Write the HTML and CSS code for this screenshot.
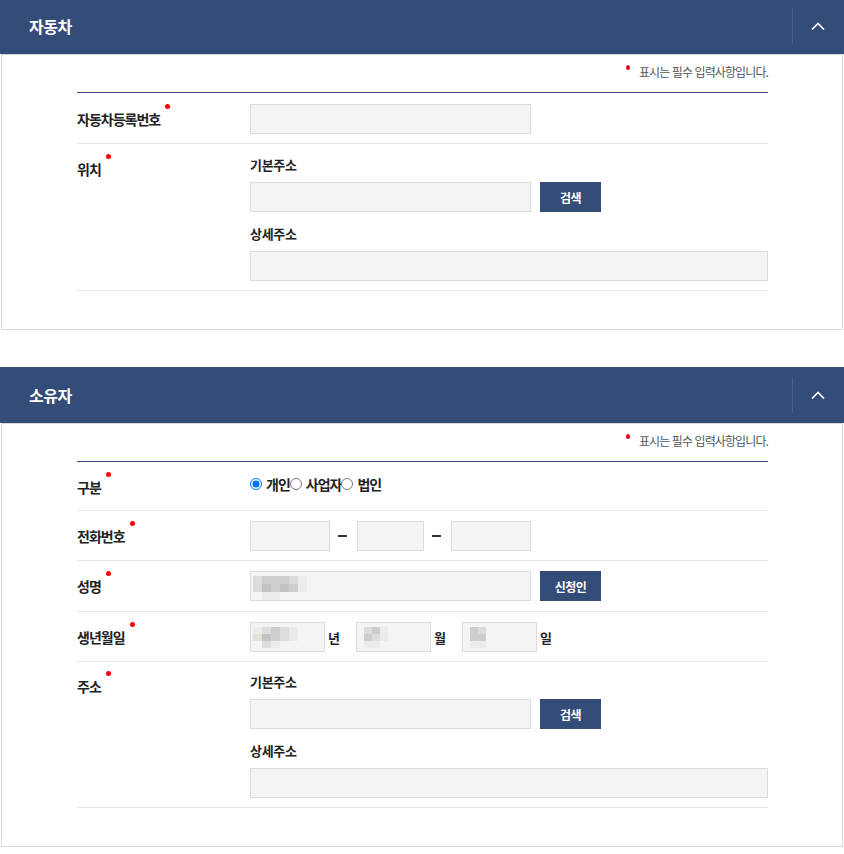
FILE: index.html
```html
<!DOCTYPE html>
<html lang="ko">
<head>
<meta charset="utf-8">
<title>자동차 / 소유자</title>
<link rel="stylesheet" href="styles.css">
</head>
<body>
<div class="page">

  <section class="panel">
    <div class="panel-head">
      <h2 class="panel-title">자동차</h2>
      <button class="panel-toggle" type="button" aria-label="접기">
        <svg width="14" height="8" viewBox="0 0 14 8"><polyline points="1,7.5 7,1.5 13,7.5" fill="none" stroke="#fff" stroke-width="1.6"/></svg>
      </button>
    </div>
    <div class="panel-body">
      <p class="req-note"><span class="note-dot"></span>표시는 필수 입력사항입니다.</p>
      <div class="form-table">
        <div class="form-row row-first">
          <div class="form-label">자동차등록번호<span class="req"></span></div>
          <div class="form-field"><input class="inp w-md" type="text"></div>
        </div>
        <div class="form-row">
          <div class="form-label">위치<span class="req"></span></div>
          <div class="form-field">
            <div class="sub-label">기본주소</div>
            <div class="field-line"><input class="inp w-md" type="text"><button class="btn" type="button">검색</button></div>
            <div class="sub-label next">상세주소</div>
            <div class="field-line"><input class="inp w-full" type="text"></div>
          </div>
        </div>
      </div>
    </div>
  </section>

  <section class="panel">
    <div class="panel-head">
      <h2 class="panel-title">소유자</h2>
      <button class="panel-toggle" type="button" aria-label="접기">
        <svg width="14" height="8" viewBox="0 0 14 8"><polyline points="1,7.5 7,1.5 13,7.5" fill="none" stroke="#fff" stroke-width="1.6"/></svg>
      </button>
    </div>
    <div class="panel-body">
      <p class="req-note"><span class="note-dot"></span>표시는 필수 입력사항입니다.</p>
      <div class="form-table">
        <div class="form-row row-short">
          <div class="form-label">구분<span class="req"></span></div>
          <div class="form-field radios">
            <label class="radio"><input type="radio" name="kind" checked>개인</label><label class="radio"><input type="radio" name="kind">사업자</label><label class="radio"><input type="radio" name="kind">법인</label>
          </div>
        </div>
        <div class="form-row">
          <div class="form-label">전화번호<span class="req"></span></div>
          <div class="form-field field-line flush">
            <input class="inp w-80" type="text"><span class="dash"></span><input class="inp w-67" type="text"><span class="dash"></span><input class="inp w-80" type="text">
          </div>
        </div>
        <div class="form-row row-tall">
          <div class="form-label">성명<span class="req"></span></div>
          <div class="form-field field-line flush">
            <div class="inp w-md masked">
              <div class="mosaic cols6">
                <span class="c3"></span><span class="c2"></span><span class="c2"></span><span class="c2"></span><span class="c3"></span><span class="c4"></span>
                <span class="c3"></span><span class="c1"></span><span class="c2"></span><span class="c1"></span><span class="c2"></span><span class="c4"></span>
                <span class="c0"></span><span class="c4"></span><span class="c4"></span><span class="c0"></span><span class="c0"></span><span class="c0"></span>
              </div>
            </div>
            <button class="btn" type="button">신청인</button>
          </div>
        </div>
        <div class="form-row">
          <div class="form-label">생년월일<span class="req"></span></div>
          <div class="form-field field-line flush">
            <div class="inp w-75 masked">
              <div class="mosaic cols5">
                <span class="c4"></span><span class="c3"></span><span class="c2"></span><span class="c3"></span><span class="c4"></span>
                <span class="c5"></span><span class="c1"></span><span class="c2"></span><span class="c3"></span><span class="c4"></span>
                <span class="c0"></span><span class="c3"></span><span class="c4"></span><span class="c0"></span><span class="c0"></span>
              </div>
            </div><span class="unit">년</span>
            <div class="inp w-75 masked m-sm">
              <div class="mosaic cols3">
                <span class="c3"></span><span class="c2"></span><span class="c4"></span>
                <span class="c2"></span><span class="c3"></span><span class="c4"></span>
                <span class="c4"></span><span class="c4"></span><span class="c0"></span>
              </div>
            </div><span class="unit">월</span>
            <div class="inp w-75 masked m-sm">
              <div class="mosaic cols3">
                <span class="c2"></span><span class="c3"></span><span class="c0"></span>
                <span class="c2"></span><span class="c2"></span><span class="c0"></span>
                <span class="c4"></span><span class="c4"></span><span class="c0"></span>
              </div>
            </div><span class="unit">일</span>
          </div>
        </div>
        <div class="form-row row-addr">
          <div class="form-label">주소<span class="req"></span></div>
          <div class="form-field">
            <div class="sub-label">기본주소</div>
            <div class="field-line"><input class="inp w-md" type="text"><button class="btn" type="button">검색</button></div>
            <div class="sub-label next">상세주소</div>
            <div class="field-line"><input class="inp w-full" type="text"></div>
          </div>
        </div>
      </div>
    </div>
  </section>

</div>
</body>
</html>
```

FILE: styles.css
```css
body {
  margin: 0;
  background: #fff;
  color: #222;
  font-family: "Noto Sans CJK KR", "Noto Sans", sans-serif;
}

.page {
  margin-top: -2px;
}

.panel + .panel {
  margin-top: 37px;
}

.panel-head {
  height: 56px;
  background: #344c78;
  display: flex;
  align-items: center;
  padding: 0 2px 0 29px;
}

.panel-title {
  margin: 0;
  font-size: 16px;
  font-weight: 700;
  color: #fff;
  letter-spacing: -0.5px;
  line-height: 20px;
}

.panel-toggle {
  margin-left: auto;
  width: 50px;
  height: 36px;
  padding: 0;
  border: 0;
  border-left: 1px solid #4b6089;
  background: transparent;
  display: flex;
  align-items: center;
  justify-content: center;
}

.panel-toggle svg {
  display: block;
}

.panel-body {
  margin: 0 1px;
  border: 1px solid #d9d9d9;
  padding: 0 74px 38px 75px;
}

.req-note {
  margin: 0 0 10px;
  padding-top: 7px;
  height: 20px;
  line-height: 20px;
  text-align: right;
  font-size: 12px;
  color: #555;
  letter-spacing: -0.9px;
}

.note-dot {
  display: inline-block;
  width: 4px;
  height: 5px;
  border-radius: 50%;
  background: #e60012;
  vertical-align: top;
  margin: 3px 9px 0 0;
}

.form-table {
  border-top: 1px solid #344c78;
}

.form-row {
  display: grid;
  grid-template-columns: 173px 1fr;
  padding: 10px 0 9px;
  border-bottom: 1px solid #e8e8e8;
}

.form-row.row-first {
  padding-top: 11px;
}

.form-row.row-short {
  padding-bottom: 8px;
}

.form-row.row-tall {
  padding-bottom: 10px;
}

.form-row.row-addr {
  padding-top: 9px;
}

.form-label {
  font-size: 14px;
  font-weight: 700;
  line-height: 30px;
  letter-spacing: -1px;
  color: #222;
}

.req {
  display: inline-block;
  width: 5px;
  height: 5px;
  border-radius: 50%;
  background: #f00;
  vertical-align: top;
  margin-left: 5px;
}

.sub-label {
  font-size: 13px;
  font-weight: 700;
  line-height: 22px;
  letter-spacing: -0.3px;
  color: #222;
}

.sub-label.next {
  margin-top: 11px;
}

.field-line {
  display: flex;
  align-items: center;
  margin-top: 6px;
}

.field-line.flush {
  margin-top: 0;
}

.inp {
  box-sizing: border-box;
  display: block;
  height: 30px;
  margin: 0;
  padding: 0 8px;
  border: 1px solid #dcdcdc;
  background: #f4f4f4;
  font: inherit;
  font-size: 13px;
  outline: none;
}

.w-md { width: 281px; }
.w-full { width: 100%; }
.w-80 { width: 80px; }
.w-67 { width: 67px; }
.w-75 { width: 75px; }

.btn {
  height: 30px;
  width: 61px;
  margin-left: 9px;
  padding: 0;
  border: 0;
  background: #344c78;
  color: #fff;
  font-family: inherit;
  font-size: 12px;
  font-weight: 700;
  letter-spacing: -0.5px;
}

.dash {
  display: inline-block;
  width: 9px;
  height: 2px;
  background: #333;
  margin: 0 10px 0 8px;
}

.unit {
  font-size: 13px;
  font-weight: 700;
  color: #222;
  margin: 0 16px 0 3px;
}

.radios {
  display: flex;
  align-items: center;
  height: 24px;
  font-size: 14px;
  font-weight: 700;
  letter-spacing: -1px;
  color: #222;
}

.radio {
  display: flex;
  align-items: center;
}

.radio input {
  width: 12px;
  height: 12px;
  margin: 0 4px 0 0;
}

.masked {
  display: flex;
  align-items: flex-start;
  padding: 4px 0 0 2px;
}

.masked.m-sm {
  padding-left: 7px;
}

.mosaic {
  display: grid;
  grid-auto-rows: 7px;
}

.mosaic.cols6 { grid-template-columns: repeat(6, 9px); grid-auto-rows: 8px; }
.mosaic.cols5 { grid-template-columns: repeat(5, 9px); }
.mosaic.cols3 { grid-template-columns: repeat(3, 8px); }

.c0 { background: transparent; }
.c1 { background: #c2c2c2; }
.c2 { background: #cdcdcd; }
.c3 { background: #dcdcdc; }
.c4 { background: #ebebeb; }
.c5 { background: #e6e1d8; }
```
